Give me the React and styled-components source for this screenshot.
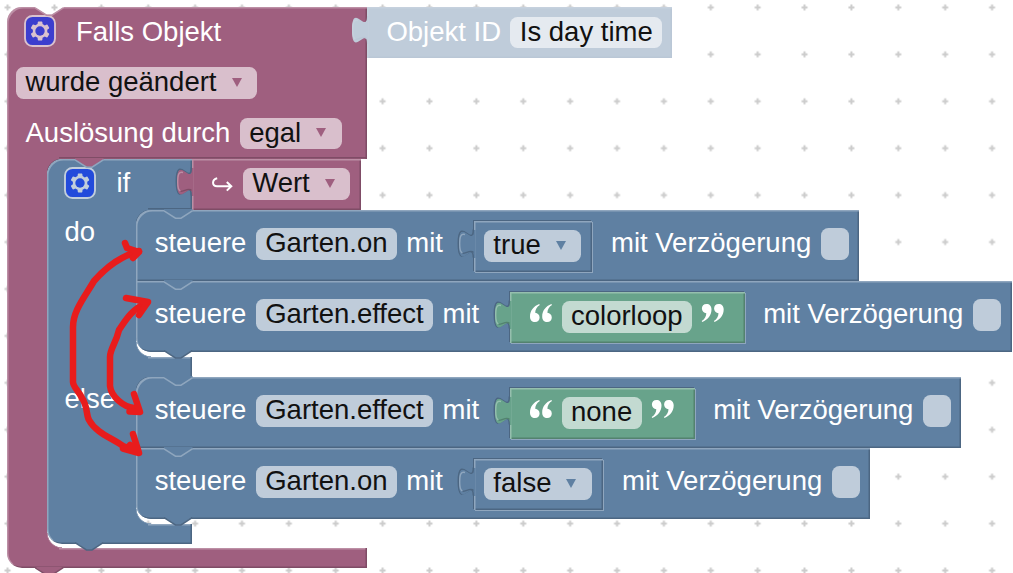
import React from "react";
import styled, { createGlobalStyle } from "styled-components";

const ROSE = { base: "#9f5f7f", light: "#bc8fa5", dark: "#7f4c66", field: "#d9bfcc" };
const BLUE = { base: "#5f80a2", light: "#8fa6be", dark: "#4c6682", field: "#bfccda" };
const GREEN = { base: "#68a38b", light: "#95bfae", dark: "#53826f", field: "#c3dad1" };
const SHADOW = { base: "#bfccda", light: "#c6d1de", dark: "#bac7d6", field: "#e5eaf0" };

const GlobalStyle = createGlobalStyle`
  body {
    margin: 0;
    background: #fff;
  }
`;

const Workspace = styled.main`
  position: relative;
  box-sizing: border-box;
  width: 1013px;
  height: 573px;
  padding: 7px 0 0 7px;
  overflow: hidden;
  font-family: "Liberation Sans", Arial, sans-serif;
  font-size: 27.5px;
  white-space: nowrap;
`;

const Grid = styled.svg`
  position: absolute;
  top: 0;
  left: 0;
`;

const Block = styled.section`
  position: relative;
  display: flex;
  flex-direction: column;
`;

/* the bottom edge line starts right of the spine, so head and spine join */
const Head = styled.header`
  position: relative;
  width: ${(p) => p.$w}px;
  background: linear-gradient(${(p) => p.$c.dark}, ${(p) => p.$c.dark})
    ${(p) => p.$spine}px 100% / 100% 1.5px no-repeat ${(p) => p.$c.base};
  background-position: right bottom;
  background-size: ${(p) => p.$w - p.$spine - 12}px 1.5px;
  border-radius: 15px 0 0 0;
  box-shadow: inset 1.5px 1.5px 0 ${(p) => p.$c.light},
    inset -1.5px 0 0 ${(p) => p.$c.dark};
`;

const Row = styled.div`
  display: flex;
  align-items: center;
  height: ${(p) => p.$h || 50.5}px;
`;

const RowMain = styled.div`
  display: flex;
  flex: none;
  align-items: center;
  box-sizing: border-box;
  width: ${(p) => p.$w}px;
  padding-left: ${(p) => p.$pad}px;
`;

const Arm = styled.div`
  display: flex;
`;

const Spine = styled.div`
  flex: none;
  box-sizing: border-box;
  width: ${(p) => p.$w}px;
  padding: 6.5px 0 0 18px;
  color: #fff;
  background: ${(p) => p.$c.base};
  box-shadow: inset 1.5px 0 0 ${(p) => p.$c.light};
`;

/* the opening of a C shaped block, with its two rounded inner corners */
const Slot = styled.div`
  flex: none;
  padding-bottom: ${(p) => p.$gap}px;
  background: radial-gradient(
        circle at 100% 100%,
        transparent 14.5px,
        ${(p) => p.$c.dark} 15px,
        ${(p) => p.$c.base} 16px
      )
      left top / 15px 15px no-repeat,
    radial-gradient(
        circle at 100% 0,
        transparent 14px,
        ${(p) => p.$c.light} 14.5px,
        ${(p) => p.$c.base} 15.5px
      )
      left bottom / 15px 15px no-repeat;
`;

const Bar = styled.div`
  position: relative;
  width: ${(p) => p.$w}px;
  height: ${(p) => p.$h}px;
  background-color: ${(p) => p.$c.base};
  background-image: linear-gradient(${(p) => p.$c.light}, ${(p) => p.$c.light});
  background-position: right top;
  background-size: ${(p) => p.$w - p.$spine - 12}px 1.5px;
  background-repeat: no-repeat;
  border-radius: ${(p) => (p.$last ? "0 0 0 15px" : "0")};
  box-shadow: inset -1.5px ${(p) => (p.$last ? -1.5 : 0)}px 0 ${(p) => p.$c.dark},
    inset 1.5px 0 0 ${(p) => p.$c.light};
`;

const StatementBox = styled.div`
  position: relative;
  display: flex;
  align-items: flex-start;
  box-sizing: border-box;
  width: ${(p) => p.$w}px;
  height: 71px;
  padding: 18.5px 0 0 18.7px;
  background: ${BLUE.base};
  border-radius: ${(p) => (p.$first ? "15px 0 0 0" : "0 0 0 15px")};
  box-shadow: inset 1.5px 1.5px 0 ${BLUE.light}, inset -1.5px -1.5px 0 ${BLUE.dark};
`;

const ValueBox = styled.div`
  position: relative;
  display: flex;
  flex: none;
  align-items: center;
  box-sizing: border-box;
  width: ${(p) => p.$w}px;
  height: 51px;
  padding-left: ${(p) => (p.$wide ? 19.4 : 10)}px;
  background: ${(p) => p.$c.base};
  box-shadow: inset 1.5px 1.5px 0 ${(p) => p.$c.light},
    inset -1.5px -1.5px 0 ${(p) => p.$c.dark}
    ${(p) =>
      p.$nested && `, -1px -1px 0 ${BLUE.dark}, 1px 1px 0 ${BLUE.light}`};
`;

const Input = styled.div`
  margin: -7.5px 18.5px 0 31px;
`;

const Label = styled.span`
  height: 31.5px;
  line-height: 30px;
  color: #fff;
  margin-left: ${(p) => p.$ml || 0}px;
`;

const Field = styled.span`
  display: flex;
  align-items: flex-start;
  box-sizing: border-box;
  height: 31.5px;
  min-width: 28px;
  margin-left: ${(p) => (p.$flush ? 0 : 9.4)}px;
  padding: 0 9.4px;
  line-height: 30px;
  color: #111;
  background: ${(p) => p.$c.field};
  border-radius: 7.5px;
`;

const Caret = styled.i`
  width: 0;
  height: 0;
  margin: 10.5px 6.3px 0 15px;
  border: solid transparent;
  border-width: 9px 5px 0;
  border-top-color: ${(p) => p.$c.base};
`;

const NotchSvg = styled.svg`
  position: absolute;
  left: ${(p) => p.$x || 28}px;
  ${(p) => (p.$bottom ? "bottom: -7.5px" : "top: -1px")};
  z-index: 1;
`;

const TabSvg = styled.svg`
  position: absolute;
  top: 9.4px;
  left: -16px;
  overflow: visible;
`;

const Scribble = styled.svg`
  position: absolute;
  top: 0;
  left: 0;
  z-index: 3;
`;

const Icon = styled.svg`
  flex: none;
  margin-left: ${(p) => p.$ml || 0}px;
  margin-bottom: ${(p) => p.$lift || 0}px;
  overflow: visible;
`;

function Notch({ fill, line, bottom, x, dot }) {
  return bottom ? (
    <NotchSvg $bottom $x={x} width="29" height="9" viewBox="0 0 29 9">
      <path d="M0 0H28.5L17 7.8H11.5Z" fill={fill} />
      <path d="M0 .6L11.5 8H17L28.2 .6" fill="none" stroke={line} strokeWidth="1.5" />
    </NotchSvg>
  ) : (
    <NotchSvg $x={x} width="29" height="11" viewBox="0 0 29 11">
      <path d="M0 0H28.5V1.5L17 8.7H11.5L0 1.5Z" fill={fill} />
      {dot && <path d="M16.5 1.4H22.5M19.5 0V4.4" stroke="#ccc" strokeWidth="2" />}
      <path d="M0 1.8L11.5 9.2H17L28.3 1.8" fill="none" stroke={line} strokeWidth="1.5" />
    </NotchSvg>
  );
}

function Tab({ c, nested }) {
  const d = "M0 0C0 18.8 -15 -15 -15 14.1S0 9.4 0 28.1";
  return (
    <TabSvg width="17.5" height="29" viewBox="-16 0 17.5 29">
      {nested && <path d={d} transform="translate(-.7 -.5)" fill="none" stroke={BLUE.dark} strokeWidth="1.5" />}
      <path d={d + "H1.5V0Z"} fill={c.base} />
      <path d="M-9 4.5C-13 3.5 -14.3 6 -14.3 14.1C-14.3 20 -13.5 22.5 -11.5 23.2" fill="none" stroke={c.light} strokeWidth="1.4" />
      <path d="M-11.5 23.4C-8 23.6 -3 19 -.5 22.5" fill="none" stroke={c.dark} strokeWidth="1.3" />
    </TabSvg>
  );
}

function Gear() {
  return (
    <Icon $lift={2} width="30" height="30" viewBox="0 0 16 16">
      <g opacity=".62">
        <rect width="16" height="16" rx="4" fill="#002bff" stroke="#fff" strokeWidth="1" />
        <path
          fill="#fff"
          d="m4.203,7.296 0,1.368 -0.92,0.677 -0.11,0.41 0.9,1.559 0.41,0.11 1.043,-0.457 1.187,0.683 0.127,1.134 0.3,0.3 1.8,0 0.3,-0.299 0.127,-1.138 1.185,-0.682 1.046,0.458 0.409,-0.11 0.9,-1.559 -0.11,-0.41 -0.92,-0.677 0,-1.366 0.92,-0.677 0.11,-0.41 -0.9,-1.559 -0.409,-0.109 -1.046,0.458 -1.185,-0.682 -0.127,-1.138 -0.3,-0.299 -1.8,0 -0.3,0.3 -0.126,1.135 -1.187,0.682 -1.043,-0.457 -0.41,0.11 -0.899,1.559 0.108,0.409z"
        />
        <circle cx="8" cy="8" r="2.5" fill="#002bff" />
      </g>
    </Icon>
  );
}

function Quote({ close }) {
  const d = "M9.2 0C3.5 2.3 0 6.8 0 12.4C0 16 2 18 5 18S9.6 16 9.6 13.4S7.6 9 5.2 8.8C5.3 5.6 6.7 3 9.8 1Z";
  return (
    <Icon $ml={close ? 9.4 : 0} $lift={8} width="22.7" height="18" viewBox="0 0 22.7 18">
      <g fill="#fff" transform={close ? "rotate(180 11.35 9)" : undefined}>
        <path d={d} />
        <path d={d} transform="translate(12.2 0)" />
      </g>
    </Icon>
  );
}

function Dropdown({ c, children, flush }) {
  return (
    <Field $c={c} $flush={flush}>
      {children}
      <Caret $c={c} />
    </Field>
  );
}

function Statement({ id, w, first, children }) {
  return (
    <StatementBox $w={w} $first={first}>
      <Notch fill={BLUE.base} line={BLUE.light} />
      <Label>steuere</Label>
      <Field $c={BLUE}>{id}</Field>
      <Label $ml={9.4}>mit</Label>
      <Input>{children}</Input>
      <Label>mit Verzögerung</Label>
      <Field $c={BLUE} />
      {!first && <Notch bottom fill={BLUE.base} line={BLUE.dark} />}
    </StatementBox>
  );
}

function Bool({ w, children }) {
  return (
    <ValueBox $c={BLUE} $w={w} $nested>
      <Tab c={BLUE} nested />
      <Dropdown c={BLUE} flush>{children}</Dropdown>
    </ValueBox>
  );
}

function Text({ w, children }) {
  return (
    <ValueBox $c={GREEN} $w={w} $wide $nested>
      <Tab c={GREEN} nested />
      <Quote />
      <Field $c={GREEN}>{children}</Field>
      <Quote close />
    </ValueBox>
  );
}

function IfBlock() {
  return (
    <Block>
      <Head $w={145.5} $spine={89.5} $c={BLUE}>
        <Notch fill={ROSE.base} line={BLUE.light} />
        <Row $h={51}>
          <RowMain $w={145.5} $pad={18.5}>
            <Gear />
            <Label $ml={21.5}>if</Label>
          </RowMain>
          <ValueBox $c={ROSE} $w={169} $wide>
            <Tab c={ROSE} nested />
            <Icon $ml={1} width="21" height="15" viewBox="0 0 21 15">
              <path
                d="M5.2 1.2C-.3 2.4 -.3 9.3 5 9.3H19M14.8 5L19.3 9.3L14.8 13.6"
                fill="none"
                stroke="#fff"
                strokeWidth="2"
              />
            </Icon>
            <Dropdown c={ROSE}>Wert</Dropdown>
          </ValueBox>
        </Row>
      </Head>
      <Arm>
        <Spine $w={89.5} $c={BLUE}>do</Spine>
        <Slot $gap={5.5} $c={BLUE}>
          <Statement first id="Garten.on" w={722.5}>
            <Bool w={118.5}>true</Bool>
          </Statement>
          <Statement id="Garten.effect" w={875.5}>
            <Text w={234.5}>colorloop</Text>
          </Statement>
        </Slot>
      </Arm>
      <Bar $w={145.5} $h={19.5} $spine={89.5} $c={BLUE} />
      <Arm>
        <Spine $w={89.5} $c={BLUE}>else</Spine>
        <Slot $gap={5.5} $c={BLUE}>
          <Statement first id="Garten.effect" w={825}>
            <Text w={184.5}>none</Text>
          </Statement>
          <Statement id="Garten.on" w={734}>
            <Bool w={129.5}>false</Bool>
          </Statement>
        </Slot>
      </Arm>
      <Bar $w={145.5} $h={19.5} $spine={89.5} $c={BLUE} $last>
        <Notch bottom fill={BLUE.base} line={BLUE.dark} />
      </Bar>
    </Block>
  );
}

function Arrows() {
  return (
    <Scribble width="1013" height="573" fill="none" stroke="#e81c1c" strokeWidth="6.5" strokeLinecap="round" strokeLinejoin="round">
      <path d="M139 251C121 256 107 266 94 281C84 298 73 311 73 327V382C73 387 79 391 82 398C88 407 86 415 89 420C96 433 112 438 123 446L138 452" />
      <path d="M125 243L127 248L139 252L133 258" />
      <path d="M133 434L139 453L123 448.500L134 450L130 445" />
      <path d="M147 303C131 309 124 323 119 330C116 343 110 349 110 357V386C111 396 123 407 134 408" />
      <path d="M126 298L148 302L139 315" />
      <path d="M134 394L140 412L129.500 411.500" />
    </Scribble>
  );
}

export default function App() {
  return (
    <>
      <GlobalStyle />
      <Workspace>
        <Grid width="1013" height="573">
          <defs>
            <pattern id="dots" x="-15.8" y="-16" width="46.88" height="46.92" patternUnits="userSpaceOnUse">
              <path d="M20.4 23.4H26.4M23.4 20.4V26.4" stroke="#ccc" strokeWidth="2" />
            </pattern>
          </defs>
          <rect width="1013" height="573" fill="url(#dots)" />
        </Grid>
        <Block>
          <Head $w={360} $spine={39.5} $c={ROSE}>
            <Notch fill="#fff" line={ROSE.light} dot />
            <Row>
              <RowMain $w={360} $pad={18}>
                <Gear />
                <Label $ml={21}>Falls Objekt</Label>
              </RowMain>
              <ValueBox $c={SHADOW} $w={305} $wide>
                <Tab c={SHADOW} />
                <Label>Objekt ID</Label>
                <Field $c={SHADOW}>Is day time</Field>
              </ValueBox>
            </Row>
            <Row>
              <RowMain $w={360} $pad={9}>
                <Dropdown c={ROSE} flush>wurde geändert</Dropdown>
              </RowMain>
            </Row>
            <Row>
              <RowMain $w={360} $pad={18.5}>
                <Label>Auslösung durch</Label>
                <Dropdown c={ROSE}>egal</Dropdown>
              </RowMain>
            </Row>
          </Head>
          <Arm>
            <Spine $w={39.5} $c={ROSE} />
            <Slot $gap={4.5} $c={ROSE}>
              <IfBlock />
            </Slot>
          </Arm>
          <Bar $w={360} $h={20} $spine={39.5} $c={ROSE} $last>
            <Notch bottom fill={ROSE.base} line={ROSE.dark} />
          </Bar>
        </Block>
        <Arrows />
      </Workspace>
    </>
  );
}
